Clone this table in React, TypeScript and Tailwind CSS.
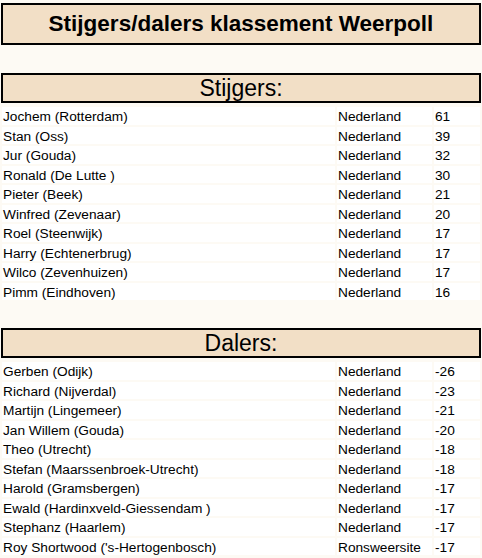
const stijgers: [string, string, number][] = [
  ['Jochem (Rotterdam)', 'Nederland', 61],
  ['Stan (Oss)', 'Nederland', 39],
  ['Jur (Gouda)', 'Nederland', 32],
  ['Ronald (De Lutte )', 'Nederland', 30],
  ['Pieter (Beek)', 'Nederland', 21],
  ['Winfred (Zevenaar)', 'Nederland', 20],
  ['Roel (Steenwijk)', 'Nederland', 17],
  ['Harry (Echtenerbrug)', 'Nederland', 17],
  ['Wilco (Zevenhuizen)', 'Nederland', 17],
  ['Pimm (Eindhoven)', 'Nederland', 16],
];

const dalers: [string, string, number][] = [
  ['Gerben (Odijk)', 'Nederland', -26],
  ['Richard (Nijverdal)', 'Nederland', -23],
  ['Martijn (Lingemeer)', 'Nederland', -21],
  ['Jan Willem (Gouda)', 'Nederland', -20],
  ['Theo (Utrecht)', 'Nederland', -18],
  ['Stefan (Maarssenbroek-Utrecht)', 'Nederland', -18],
  ['Harold (Gramsbergen)', 'Nederland', -17],
  ['Ewald (Hardinxveld-Giessendam )', 'Nederland', -17],
  ['Stephanz (Haarlem)', 'Nederland', -17],
  ["Roy Shortwood ('s-Hertogenbosch)", 'Ronsweersite', -17],
];

function Section({ title, rows }: { title: string; rows: [string, string, number][] }) {
  return (
    <section className="mt-[28px]">
      <h2 className="mx-px h-[30px] border-2 border-black bg-[#f2dfc6] text-center text-[23px] leading-[26px] font-normal">
        {title}
      </h2>
      <div className="mt-[4px] grid grid-cols-[333px_95px_1fr] gap-[2px] px-[2px] text-[13.7px] leading-[15.5px]">
        {rows.map(([name, land, n]) => (
          <div key={name} className="contents">
            <div className="h-[17.5px] bg-white px-px pt-[2px] whitespace-nowrap">{name}</div>
            <div className="h-[17.5px] bg-white px-px pt-[2px] whitespace-nowrap">{land}</div>
            <div className="h-[17.5px] bg-white px-px pt-[2px]">{n}</div>
          </div>
        ))}
      </div>
    </section>
  );
}

export default function App() {
  return (
    <div className="min-h-screen bg-[#fdfaf4] pt-[3px] text-black font-['Liberation_Sans',Arial,sans-serif]">
      <h1 className="mx-px flex h-[42px] items-center justify-center border-2 border-black bg-[#f2dfc6] text-[22.5px] font-bold">
        Stijgers/dalers klassement Weerpoll
      </h1>
      <Section title="Stijgers:" rows={stijgers} />
      <Section title="Dalers:" rows={dalers} />
    </div>
  );
}
